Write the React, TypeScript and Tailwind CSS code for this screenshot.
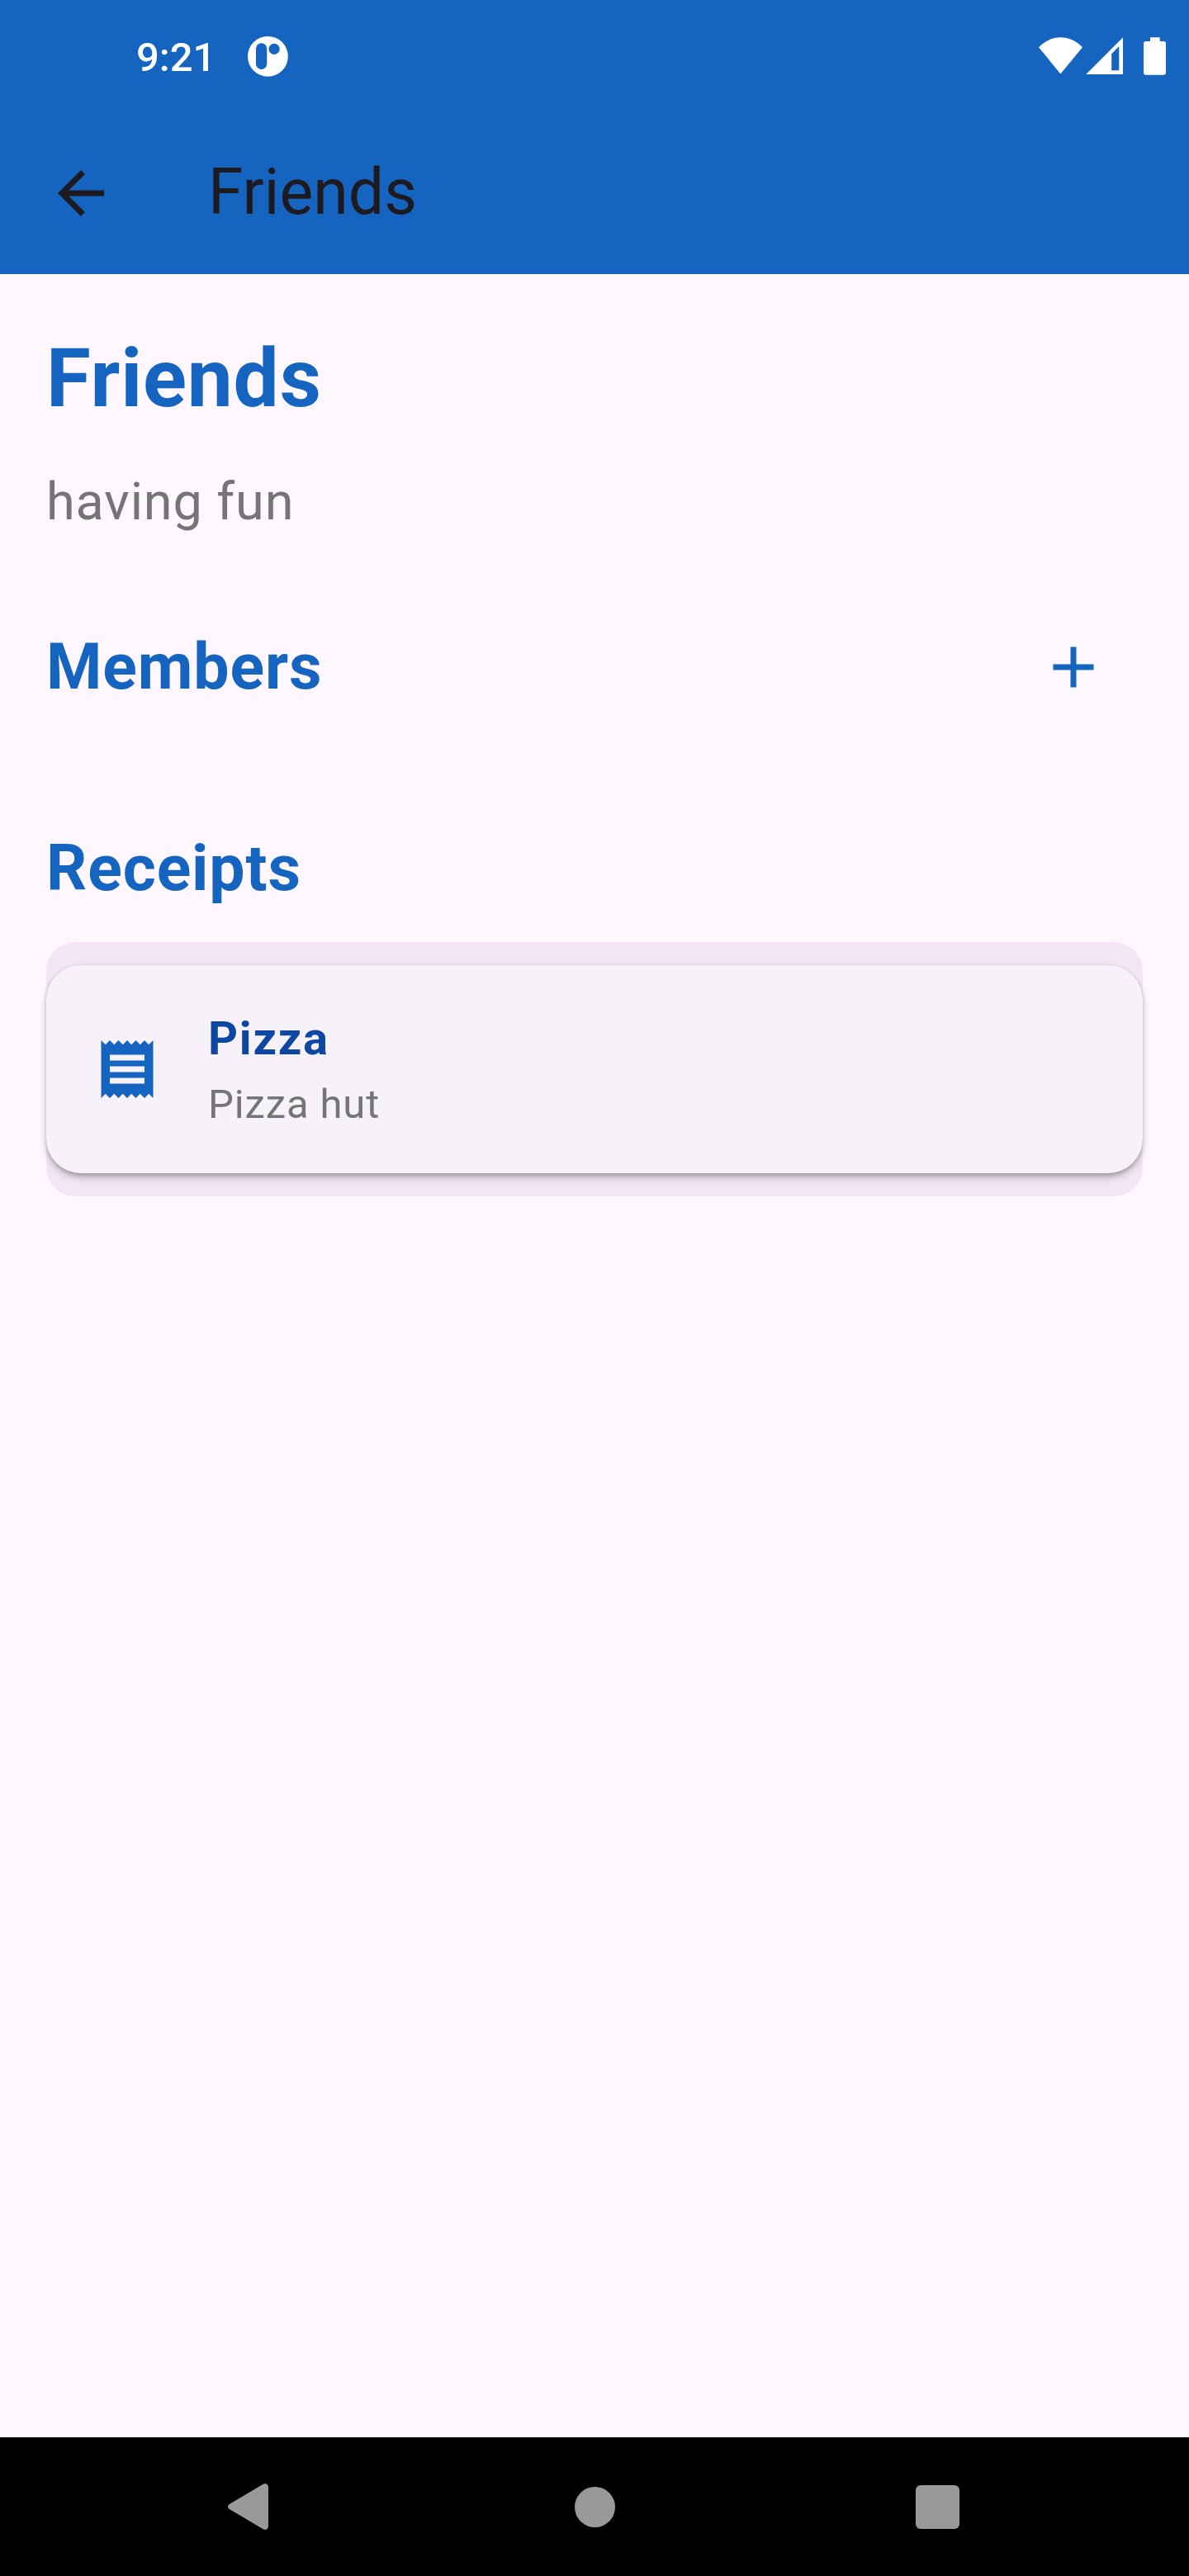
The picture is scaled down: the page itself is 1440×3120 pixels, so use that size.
function StatusBar() {
  return (
    <div className="flex h-[136px] items-start justify-between pr-7 pl-[165px] text-white">
      <div className="flex">
        <span className="mt-[41px] w-[97px] text-[49px] leading-[58px] font-medium">9:21</span>
        <svg className="mt-[43px] ml-[37px] h-[50px] w-[50px]" viewBox="0 0 50 50">
          <circle cx="25.4" cy="25.3" r="24.4" fill="#fff" />
          <rect x="11" y="9.3" width="13.3" height="31.6" rx="6.6" fill="#1565c0" />
          <circle cx="33.1" cy="16.4" r="6.6" fill="#1565c0" />
        </svg>
      </div>
      <div className="mt-[45px] flex">
        <svg className="h-[47px] w-[53px]" viewBox="0 0 53 47" fill="currentColor">
          <path d="M26.4 44.5 0 12.2C7.5 4.4 16.6.3 26.4.3S45.3 4.4 53 12.2Z" />
        </svg>
        <svg className="ml-1 h-[47px] w-[45px]" viewBox="0 0 45 47" fill="currentColor" fillRule="evenodd">
          <path d="M.3 45 45 .3V45ZM31.2 20.2V40.3H40.3V11.1Z" />
        </svg>
        <svg className="ml-[25px] h-[47px] w-[27px]" viewBox="0 0 27 47" fill="currentColor">
          <path d="M8 .3H19.7V5H24.3Q27 5 27 7.7V43Q27 45.8 24.3 45.8H2.7Q0 45.8 0 43V7.7Q0 5 2.7 5H8Z" />
        </svg>
      </div>
    </div>
  );
}

function Toolbar() {
  return (
    <div className="flex h-[196px] items-center pl-14 text-[#1d1b20]">
      <button aria-label="Back">
        <svg className="h-[84px] w-[84px]" viewBox="0 0 24 24" fill="currentColor">
          <path d="M20 11H7.83l5.59-5.59L12 4l-8 8 8 8 1.41-1.41L7.83 13H20v-2z" />
        </svg>
      </button>
      <h1 className="mb-[2px] ml-28 text-[77px] leading-[98px]">Friends</h1>
    </div>
  );
}

function ReceiptCard({ title, subtitle }: { title: string; subtitle: string }) {
  return (
    <div className="flex h-[252px] items-center rounded-[42px] bg-[#f7f2fa] pl-14 shadow-[0_6px_11px_-3px_rgba(0,0,0,0.38),0_1px_5px_rgba(0,0,0,0.13)]">
      <svg className="h-[84px] w-[84px] text-[#1565c0]" viewBox="0 0 24 24" fill="currentColor">
        <path d="M18 17H6v-2h12v2zm0-4H6v-2h12v2zm0-4H6V7h12v2zM3 22l1.5-1.5L6 22l1.5-1.5L9 22l1.5-1.5L12 22l1.5-1.5L15 22l1.5-1.5L18 22l1.5-1.5L21 22V2l-1.5 1.5L18 2l-1.5 1.5L15 2l-1.5 1.5L12 2l-1.5 1.5L9 2 7.5 3.5 6 2 4.5 3.5 3 2v20z" />
      </svg>
      <div className="ml-14">
        <p className="text-[56px] leading-[84px] font-bold tracking-[1.75px] text-[#0d47a1]">{title}</p>
        <p className="mt-[3px] text-[49px] leading-[70px] tracking-[0.875px] text-[#757575]">{subtitle}</p>
      </div>
    </div>
  );
}

function NavigationBar() {
  return (
    <nav className="flex h-[168px] items-center bg-black text-[#999]">
      <svg className="ml-[276px] h-[56px] w-[49px]" viewBox="0 0 49 56" fill="currentColor">
        <path d="M1.8 25 42.8.8Q45.3-.6 47.2.8 49 2 49 4.5V51.5Q49 54 47.2 55.2 45.3 56.6 42.8 55.2L1.8 31Q0 30 0 28T1.8 25Z" />
      </svg>
      <div className="ml-[370.5px] h-[49px] w-[49px] rounded-full bg-current" />
      <div className="ml-[364px] h-[53px] w-[53px] rounded-[6px] bg-current" />
    </nav>
  );
}

export default function App() {
  return (
    <div className="flex h-[3120px] w-[1440px] flex-col overflow-hidden bg-[#fef7ff] font-['Roboto',sans-serif]">
      <header className="bg-[#1565c0]">
        <StatusBar />
        <Toolbar />
      </header>
      <main className="flex-1 px-14 pt-16 tracking-[0.875px]">
        <h2 className="text-[98px] leading-[126px] font-bold text-[#1565c0]">Friends</h2>
        <p className="mt-11 text-[63px] leading-[84px] text-[#757575]">having fun</p>
        <div className="mt-[74px] flex h-[168px] items-center justify-between">
          <h3 className="text-[77px] leading-[98px] font-bold text-[#1565c0]">Members</h3>
          <button aria-label="Add member" className="flex h-[168px] w-[168px] items-center justify-center">
            <svg className="h-[84px] w-[84px] text-[#1565c0]" viewBox="0 0 24 24" fill="currentColor">
              <path d="M19 13h-6v6h-2v-6H5v-2h6V5h2v6h6v2z" />
            </svg>
          </button>
        </div>
        <h3 className="mt-[111px] text-[77px] leading-[98px] font-bold text-[#1565c0]">Receipts</h3>
        <div className="mt-[39.5px] rounded-[35px] bg-[#f3e5f5] py-7">
          <ReceiptCard title="Pizza" subtitle="Pizza hut" />
        </div>
      </main>
      <NavigationBar />
    </div>
  );
}
